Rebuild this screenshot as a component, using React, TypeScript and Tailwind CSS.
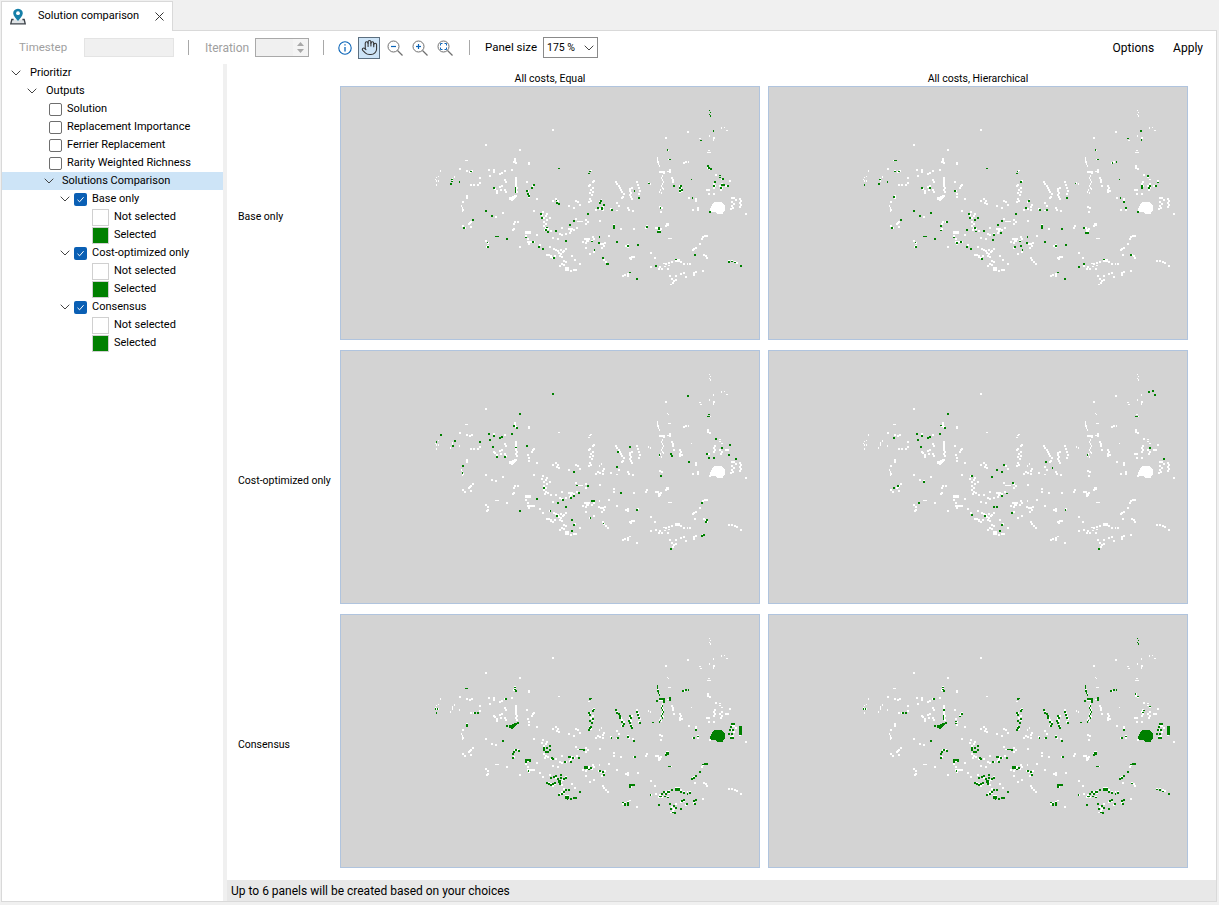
import React from "react";
import { Hand } from "lucide-react";

const WHITE = `866,30 869,36 866,42 870,46 902,82 912,80 919,90 878,91 802,94 838,114 841,120 880,112 878,118 866,106 736,112 397,88 196,133 298,148 740,146 744,150 744,176 748,176 862,155 868,155 865,150 136,179 140,179 283,175 283,181 280,184 286,187 325,187 325,190 415,203 711,172 711,178 712,184 714,190 716,196 790,187 796,184 804,184 862,196 862,202 868,205 508,212 511,209 505,218 60,211 118,205 139,211 148,214 154,211 205,208 220,208 220,214 208,226 238,220 244,217 253,211 274,208 718,212,18,6 730,218,6,3 742,212 748,208 748,214 178,232 48,230 54,227 45,236 48,241 54,241 48,253 102,229 96,235 96,241 90,250 117,244 151,253 160,253 172,253 178,247 812,236 726,226 723,232 726,238 729,244 726,250 723,256 726,262 720,268 717,274 723,277 729,265 754,232 757,238 757,244 760,256 886,223 898,224 898,230 904,236 520,241 517,244 508,253 505,256 517,262 511,268 517,274 508,277 514,283 508,295 511,301 505,304 586,244 589,250 595,256 598,262 601,268 604,274 610,280 607,289 628,265 634,262 628,271 631,277 628,283 631,289 634,295 649,244 652,253 655,262 658,271 655,280 684,247 690,250 778,256 781,262 778,268 784,271 778,274 928,241 883,244 880,250 883,256 880,262 904,250 898,256 904,262 901,268 916,256 922,256 859,268 865,268 880,280 865,280 220,262 223,265 229,271 238,259 253,238 256,244 244,256 253,268 256,274 229,277 241,268 286,232 286,238 286,244 286,250 286,256 289,262 286,268 289,274 340,253 334,262 337,256 319,244 322,271 325,280 325,289 139,286 139,292 349,295 406,295 397,301 412,301 409,307 415,310 466,301 472,304 478,313 460,322 445,316 543,298 537,304 532,322 526,328 547,319 550,313 547,328 538,325 589,307 604,292 595,316 622,322 625,328 637,331 571,325 589,330 127,304 122,316 125,322 127,328 125,331 805,292 826,295 826,301 832,322 817,328 832,328 718,319 724,322 721,334 934,292 940,292 946,298 934,304 940,310 934,316 931,325 937,322 958,295 961,301 958,307 961,313 958,319 976,340 868,334 196,331 214,346 226,349 247,337 340,331 367,334 379,340 364,343 376,346 370,352 388,352,6,6 379,358 370,364 376,370 370,376 376,382 382,385 373,388 391,391 466,355 472,364,18,3 496,358 502,364 496,370 538,361 580,373 580,382 601,385 640,385 676,382 679,376 157,358 151,364 148,367 127,376 133,382 151,379 145,370 283,364 280,370 292,364 277,388 280,385 706,382 712,382 715,388 718,391 721,385 715,394 738,370,9,7 736,376 316,394,18,9 316,406 322,415 322,424 328,424 334,424 340,424 325,430 349,403 406,391 424,382 445,385,15,6 451,391 460,388 469,382 448,397 418,400 424,403 436,400 397,412 412,415 226,409,12,3 259,415 745,413,12,4 847,409 853,406 859,406 844,415 196,421 202,427 202,436 199,439 493,415,18,6 499,421,9,6 517,409 514,421 496,427 536,409 520,415 535,427 541,430 547,430 553,427 550,436 544,442 565,406 589,424 616,436 622,433 622,439 652,433 358,433 367,445 388,439 298,439 496,442 487,424 820,445 826,442 817,448 838,430 400,445 406,448 412,451 421,448 430,451 436,445 427,454 415,457 421,460 418,466 424,469 379,463 385,463 391,469 397,472 403,466 391,466 454,466 463,478 520,454 508,460 547,472 550,478 556,484 562,490 823,463 850,463 856,466 859,472 628,472 634,469 640,469 631,475 691,457 703,472 925,481 934,481 943,484 949,487 961,496 430,481 436,484 424,490 418,496 430,493 478,490 434,502,12,12 451,511 460,508 466,508 730,488 736,490 745,487 754,484 766,478,15,9 781,484 790,490 800,490 808,490 745,495 733,497 724,505 718,499 742,505 691,499 706,496 715,505 847,511 820,517 826,514 820,523 790,517 781,520 796,529 748,526 766,526 613,523 622,520 628,515 607,526 622,526 649,535 754,535 760,541 766,538 757,547 751,552`;

const G11 = `866,30 869,36 866,42 870,46 878,91 841,120 741,148 748,176 862,196 865,202 871,205 508,212 505,218 415,203 151,212 94,237 94,243 91,250 117,244 898,224 898,230 907,235 883,246 880,256 883,244 904,253 910,253 901,262 922,256 812,236 781,256 778,262 784,268 778,271 760,256 685,248 641,271 340,253 334,262 319,271 322,280 325,286 220,262 286,260,3,18 655,292 815,292 408,299 409,307 415,310 541,301 538,307 550,313 532,322 544,322,6,9 574,328 720,322 196,331 214,346 868,334 361,340 364,352 157,358 460,361 502,340 448,373 379,380 382,394 376,388 406,391 580,376 580,382 679,379 714,382,6,9 712,394 718,394 130,382 316,411 226,409,12,3 259,415 200,425 202,439 337,424 436,421 536,409 514,423,6,3 535,427 589,424 622,436 652,433 355,439 367,445 522,448 547,472 559,490 564,490 823,463 400,472 925,484 934,482 943,486 961,496 706,496 766,476 628,515 649,535`;

const G12 = `139,179 142,179 151,212 139,212 94,236 91,250 117,244 48,253 136,289 220,262 244,262 319,271 415,203 508,212,3,3 505,218 517,244 541,301 532,322 574,328 595,328 680,248 655,292 741,148 748,176 791,187 803,184 812,236 838,114 877,91 878,118 898,226 880,256 880,262 904,256 901,262 922,256 928,246 815,292 826,304 832,322 868,334 196,331 214,346 247,337 361,340 364,352 379,358 388,352,6,6 157,358 460,361 448,373 502,340 277,376 277,390 295,364 355,388 379,382 382,393 406,391 580,376 580,382 640,385 706,382 712,397 718,397 130,382 316,411 226,409,12,3 259,415 200,425 202,439 325,427 337,424 436,403 433,418 457,397 514,423,6,3 536,409 535,427 499,439 517,436 589,424 622,436 652,433 355,439 367,445 522,448 400,475 847,463 691,499 706,490 766,476 628,515 649,535`;

const G21 = `397,88 802,94 298,148 862,155,9,3 865,150 280,184 289,190 61,211 205,208 220,214 208,226 238,220 244,217 274,208 103,229 48,232 97,244 178,232 286,248 319,244 217,247 628,247 592,262 716,271 751,268 754,274 886,223 904,250 928,241 925,271 946,283 859,268 865,280 880,280 229,277 253,277 127,304 125,325 589,307 805,292 721,334 460,322 370,370 469,364,6,3 502,364 475,385 451,400 460,394 427,406 412,415 349,403 601,385 514,409 520,409 436,427 298,439 389,439 409,454 454,466 460,481 509,460 649,436 844,415 859,466 856,472 549,476 454,499 844,514 850,511 751,553`;

const G22 = `901,82 913,79 919,91 862,157,9,3 298,148 277,184,6,3 289,190 205,208 220,214 208,226 238,220 244,217 274,208 136,220 217,247 904,250 946,283 592,292 612,310 466,301 445,316 460,322 430,337 370,334 226,352 493,355 148,364 136,370 475,387 460,394 211,415 436,427 445,427 490,445 370,451 409,454 460,481 454,499 650,436 716,271 751,553`;

const G3 = `283,170 283,176 286,181 256,205 45,235 50,235 163,247 172,247 247,331 268,286,12,9 280,283 286,280 292,277 259,286 508,205 511,203 520,236 517,241 505,247 508,253 517,265 508,271 514,277 508,292 511,289 505,298 586,238 589,247 595,250 598,256,3,12 601,256,3,12 604,274 610,280 607,286 628,256 631,262 625,271 628,277 631,286 634,292 649,244 652,253 655,262 658,277 697,276 711,166 711,172 712,181 714,187 716,193 709,211 718,205,18,6 730,211 748,202 748,208 730,214 726,226 723,232 726,238 729,244 726,250 723,256 726,262 720,270 717,274 787,181 796,178 804,178 316,388,18,6 316,394,6,6 328,394,6,3 325,420,3,6 286,358 280,364 277,370 277,382 295,361 370,352 379,352 388,346,6,6 388,358 370,358 376,364 382,364 394,382 397,385 478,358,12,3 490,358 445,379,9,6 457,382 475,382 433,394 451,394 492,408,12,9 500,412 511,412 505,416 538,421 547,424,6,6 550,433 622,318,6,6 640,331 572,322 592,322 643,379 738,367,9,7 736,373 745,408,9,4 847,402 853,400 859,400 838,424 814,445 820,442 826,436 391,442 400,439 406,436 412,445 421,442 430,445 436,442 421,433 415,451,9,9 418,460 379,457 385,460,6,6 391,463 397,460 403,457 478,484 415,493 424,490 430,484 436,478 445,478 435,497,12,9 440,505 451,505 460,502 466,502 628,463 634,463 640,463 628,469 607,517,6,3 613,520 622,517 613,523 622,523 690,493 718,499,9,3 724,490,6,6 730,484 736,490 742,484 742,500 733,497 745,484 754,478 766,475,15,9 781,484 790,487 800,490 808,487 715,523 748,520 760,526 781,535 766,532 757,545 763,547 751,535 820,511,6,6 826,508 823,520 790,508 784,511 799,520 820,322 832,318 826,298 934,280 940,280 931,289 928,298 925,310 937,298 934,310 931,322 937,322 958,288,7,27`;
const G31 = `136,173 140,173 139,283 139,286 48,247`;
const G32 = `866,24 869,30 866,36 869,40 862,190,3,6 868,198 904,228 886,240 883,246 340,250 334,258 322,272 322,278 286,238 286,254,3,15 925,476 934,478 943,482 961,490 850,458 820,322`;

function parse(s: string, dy = 0): string {
  return s
    .trim()
    .split(/\s+/)
    .map((t) => {
      const p = t.split(",").map(Number);
      const w = p[2] ?? 4;
      const h = p[3] ?? 4;
      return `M${p[0]} ${p[1] + dy}h${w}v${h}h-${w}z`;
    })
    .join("");
}

const whitePath = parse(WHITE);
const BIG = "870,328 874,318 880,310 886,305 904,305 912,312 916,320 916,332 910,336 908,342 892,342 888,336 878,336 870,334";
const FAN = "268,292 292,283 292,289 276,303 268,300";

function MapPanel({ green, big }: { green: string; big?: boolean }) {
  return (
    <div className="h-[254px] w-[420px] border border-[#b0c4de] bg-[#d3d3d3]">
      <svg width="418" height="252" viewBox="-237 -39 1254 756" className="block" shapeRendering="crispEdges">
        <path d={whitePath} fill="#ffffff" />
        <polygon points={FAN} fill={big ? "#008000" : "#ffffff"} />
        <polygon points={BIG} fill={big ? "#008000" : "#ffffff"} />
        <path d={green} fill="#008000" />
      </svg>
    </div>
  );
}

const g11 = parse(G11);
const g12 = parse(G12);
const g21 = parse(G21);
const g22 = parse(G22);
const g31 = parse(G3, 6) + parse(G31, 6);
const g32 = parse(G3, 6) + parse(G32, 6);

function Chevron() {
  return (
    <svg width="10" height="6" viewBox="0 0 10 6" fill="none" className="shrink-0">
      <path d="M0.7 0.7 L5 5 L9.3 0.7" stroke="#444444" strokeWidth="1" />
    </svg>
  );
}

function Row({ pad, chevron, children, active }: { pad: number; chevron?: boolean; children: React.ReactNode; active?: boolean }) {
  return (
    <div className={"flex h-[18px] items-center whitespace-nowrap " + (active ? "bg-[#cde4f7]" : "")} style={{ paddingLeft: pad }}>
      {chevron && <Chevron />}
      {children}
    </div>
  );
}

function Unchecked() {
  return <span className="mr-[5px] block h-[13px] w-[13px] rounded-[2px] border border-[#6e6e6e] bg-white" />;
}

function Checked() {
  return (
    <span className="ml-[4px] mr-[5px] flex h-[13px] w-[13px] items-center justify-center rounded-[2px] bg-[#0a5fb4]">
      <svg width="9" height="9" viewBox="0 0 9 9" fill="none">
        <path d="M1.5 4.8 L3.6 6.8 L7.6 2.2" stroke="#ffffff" strokeWidth="1" />
      </svg>
    </span>
  );
}

function Legend({ label, green }: { label: string; green?: boolean }) {
  return (
    <div className="flex h-[18px] items-center whitespace-nowrap pl-[90px]">
      <span className={"block h-[17px] w-[17px] border border-[#d0d0d0] " + (green ? "bg-[#008000]" : "bg-white")} />
      <span className="ml-[5px]">{label}</span>
    </div>
  );
}

function Group({ label }: { label: string }) {
  return (
    <>
      <Row pad={58} chevron>
        <Checked />
        <span>{label}</span>
      </Row>
      <Legend label="Not selected" />
      <Legend label="Selected" green />
    </>
  );
}

function Sep() {
  return <span className="block h-[15px] w-px bg-[#a8a8a8]" />;
}

function ZoomIcon({ sign }: { sign: "minus" | "plus" | "fit" }) {
  return (
    <svg width="16" height="16" viewBox="0 0 16 16" fill="none">
      <circle cx="6.5" cy="6.5" r="5.5" stroke="#6f6f6f" />
      <path d="M10.5 10.5 L15.5 15.5" stroke="#6f6f6f" strokeWidth="1.2" />
      {sign !== "fit" && <path d="M4 6.5 H9" stroke="#0a64b8" strokeWidth="1.2" />}
      {sign === "plus" && <path d="M6.5 4 V9" stroke="#0a64b8" strokeWidth="1.2" />}
      {sign === "fit" && (
        <path d="M3.5 5.5 V3.5 H5.5 M7.5 3.5 H9.5 V5.5 M9.5 7.5 V9.5 H7.5 M5.5 9.5 H3.5 V7.5" stroke="#0a64b8" />
      )}
    </svg>
  );
}

export default function App() {
  return (
    <div className="flex h-[905px] w-[1219px] flex-col overflow-hidden bg-[#f0f0f0] text-[11px] text-black font-['Roboto','Liberation_Sans',sans-serif]">
      {/* tab strip */}
      <div className="flex h-[30px] shrink-0 items-end pl-px">
        <div className="relative -mb-px z-10 flex h-[30px] w-[172px] items-center border border-b-0 border-[#d9d9d9] bg-white pl-[8px]">
          <svg width="16" height="17" viewBox="0 0 16 17" fill="none" className="shrink-0">
            <path d="M3.6 11.5 H1.8 L0.8 15.8 H15.2 L14.2 11.5 H12.4" stroke="#3c4248" strokeWidth="1.3" fill="#dfe3e6" />
            <path d="M8 0.8 C4.8 0.8 3.2 3 3.2 5.3 C3.2 8 6.2 10.8 8 13 C9.8 10.8 12.8 8 12.8 5.3 C12.8 3 11.2 0.8 8 0.8 Z" fill="#157fa8" />
            <circle cx="8" cy="5.2" r="1.9" fill="#ffffff" />
          </svg>
          <span className="ml-[12px] whitespace-nowrap">Solution comparison</span>
          <svg width="9" height="9" viewBox="0 0 9 9" fill="none" className="ml-auto mr-[8px]">
            <path d="M0.5 0.5 L8.5 8.5 M8.5 0.5 L0.5 8.5" stroke="#333333" />
          </svg>
        </div>
      </div>

      {/* content frame */}
      <div className="ml-px mr-[2px] flex h-[872px] shrink-0 flex-col border border-[#d9d9d9] bg-white">
        {/* toolbar */}
        <div className="flex h-[33px] shrink-0 items-center pl-[17px] pr-[13px] text-[12px]">
          <span className="w-[65px] text-[11.5px] text-[#a0a0a0]">Timestep</span>
          <span className="block h-[19px] w-[90px] border border-[#e4e4e4] bg-[#f0f0f0]" />
          <span className="mx-[14px]"><Sep /></span>
          <span className="ml-[2px] w-[50px] text-[#a0a0a0]">Iteration</span>
          <span className="flex h-[19px] w-[54px] justify-end border border-[#a9a9a9] bg-[#f0f0f0]">
            <span className="flex w-[15px] flex-col items-center justify-center gap-[3px] bg-[#f4f4f4]">
              <svg width="7" height="4" viewBox="0 0 7 4"><path d="M0 4 L3.5 0 L7 4Z" fill="#a8a8a8" /></svg>
              <svg width="7" height="4" viewBox="0 0 7 4"><path d="M0 0 L3.5 4 L7 0Z" fill="#a8a8a8" /></svg>
            </span>
          </span>
          <span className="mx-[14px]"><Sep /></span>
          <svg width="14" height="14" viewBox="0 0 14 14" fill="none">
            <circle cx="7" cy="7" r="6.2" stroke="#0a64b8" strokeWidth="1.1" />
            <path d="M7 6 V10.5" stroke="#0a64b8" strokeWidth="1.3" />
            <path d="M7 3.2 V4.6" stroke="#0a64b8" strokeWidth="1.3" />
          </svg>
          <span className="ml-[6px] flex h-[22px] w-[22px] items-center justify-center border border-[#5c6f80] bg-[#cde4f7]">
            <Hand size={17} strokeWidth={1.5} color="#333333" />
          </span>
          <span className="ml-[7px] block h-[16px]"><ZoomIcon sign="minus" /></span>
          <span className="ml-[9px] block h-[16px]"><ZoomIcon sign="plus" /></span>
          <span className="ml-[9px] block h-[16px]"><ZoomIcon sign="fit" /></span>
          <span className="ml-[16px]"><Sep /></span>
          <span className="ml-[15px] w-[51px] whitespace-nowrap text-[11.5px]">Panel size</span>
          <span className="ml-[7px] flex h-[21px] w-[55px] items-center justify-between border border-[#8a8a8a] pl-[3px] pr-[3px] text-[10.5px]">
            <span>175 %</span>
            <Chevron />
          </span>
          <span className="ml-auto">Options</span>
          <span className="ml-[19px]">Apply</span>
        </div>

        <div className="flex min-h-0 flex-1">
          {/* tree */}
          <div className="w-[221px] shrink-0">
            <Row pad={9} chevron><span className="ml-[9px]">Prioritizr</span></Row>
            <Row pad={25} chevron><span className="ml-[9px]">Outputs</span></Row>
            {["Solution", "Replacement Importance", "Ferrier Replacement", "Rarity Weighted Richness"].map((t) => (
              <Row key={t} pad={47}>
                <Unchecked />
                <span>{t}</span>
              </Row>
            ))}
            <Row pad={42} chevron active><span className="ml-[8px]">Solutions Comparison</span></Row>
            <Group label="Base only" />
            <Group label="Cost-optimized only" />
            <Group label="Consensus" />
          </div>

          {/* splitter + main */}
          <div className="w-[4px] shrink-0 bg-[#f0f0f0]" />
          <div className="flex min-w-0 flex-1 flex-col">
            <div className="flex-1 pl-[11px] pt-[7px] text-[10.5px]">
              <div className="grid h-[15px] grid-cols-[94px_420px_420px] items-center gap-x-[8px] text-center leading-[15px]">
                <span />
                <span>All costs, Equal</span>
                <span>All costs, Hierarchical</span>
              </div>
              <div className="grid grid-cols-[94px_420px_420px] items-center gap-x-[8px] gap-y-[10px] whitespace-nowrap">
                <span className="pt-[8px]">Base only</span>
                <MapPanel green={g11} />
                <MapPanel green={g12} />
                <span className="pt-[8px]">Cost-optimized only</span>
                <MapPanel green={g21} />
                <MapPanel green={g22} />
                <span className="pt-[8px]">Consensus</span>
                <MapPanel green={g31} big />
                <MapPanel green={g32} big />
              </div>
            </div>
            <div className="flex h-[21px] shrink-0 items-center bg-[#e8e8e8] pl-[4px] text-[12px]">
              Up to 6 panels will be created based on your choices
            </div>
          </div>
        </div>
      </div>
    </div>
  );
}
